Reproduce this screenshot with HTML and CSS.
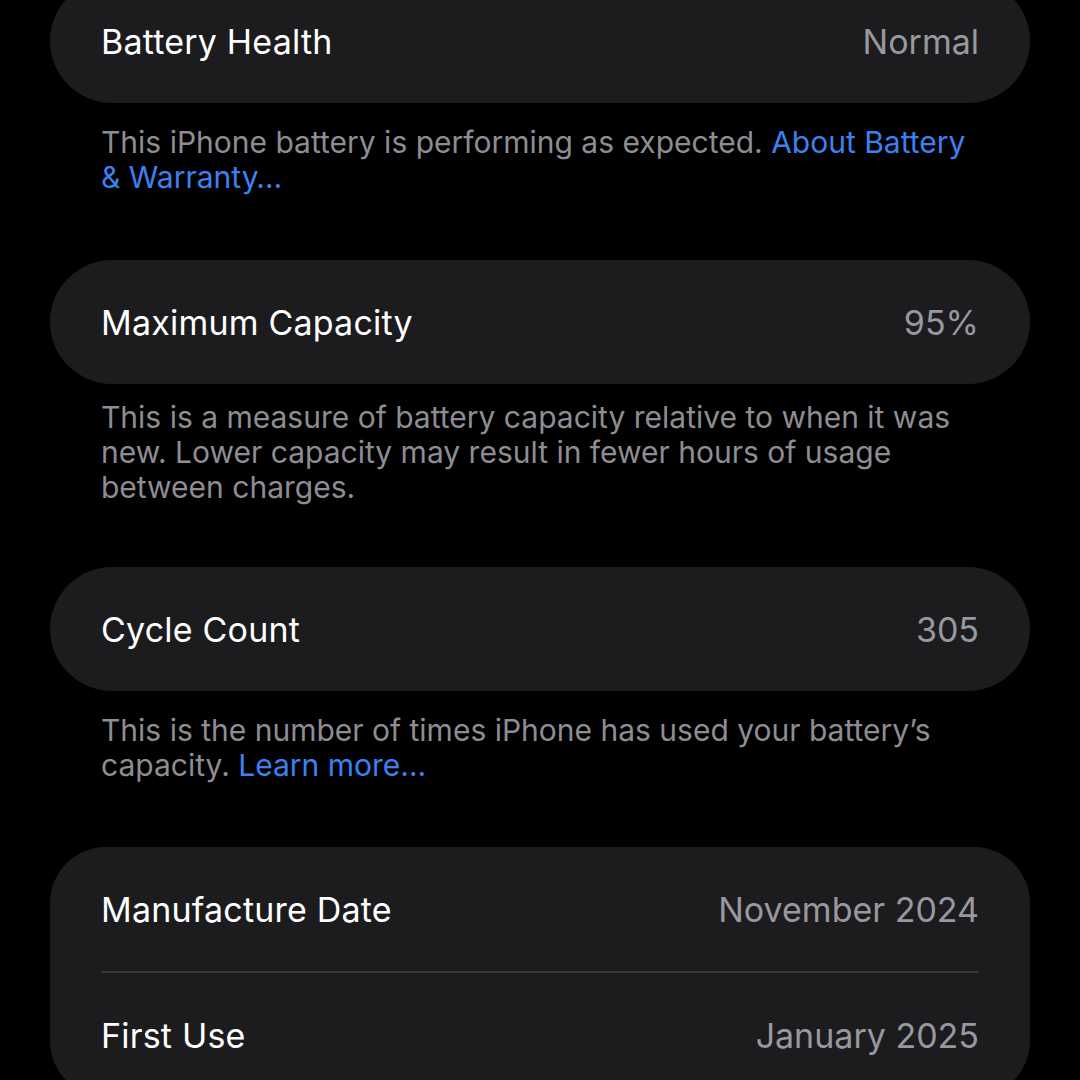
FILE: index.html
```html
<!DOCTYPE html>
<html lang="en">
<head>
<meta charset="utf-8">
<title>Battery Health</title>
<link rel="stylesheet" href="styles.css">
</head>
<body>
<main class="page">
  <section class="group group-first">
    <div class="card">
      <div class="row"><span class="label">Battery Health</span><span class="value">Normal</span></div>
    </div>
    <p class="note">This iPhone battery is performing as expected. <a class="link">About Battery &amp; Warranty…</a></p>
  </section>

  <section class="group">
    <div class="card">
      <div class="row"><span class="label">Maximum Capacity</span><span class="value">95%</span></div>
    </div>
    <p class="note note-tight">This is a measure of battery capacity relative to when it was new. Lower capacity may result in fewer hours of usage between charges.</p>
  </section>

  <section class="group group-third">
    <div class="card">
      <div class="row"><span class="label">Cycle Count</span><span class="value">305</span></div>
    </div>
    <p class="note">This is the number of times iPhone has used your battery’s capacity. <a class="link">Learn more…</a></p>
  </section>

  <section class="group group-last">
    <div class="card card-list">
      <div class="row"><span class="label">Manufacture Date</span><span class="value">November 2024</span></div>
      <div class="divider"></div>
      <div class="row"><span class="label">First Use</span><span class="value">January 2025</span></div>
    </div>
  </section>
</main>
</body>
</html>
```

FILE: styles.css
```css
html, body {
  margin: 0;
  padding: 0;
  background: #000;
  height: 1080px;
  overflow: hidden;
}

.page {
  padding: 0 50px;
  font-family: Inter, "Noto Sans", "Liberation Sans", sans-serif;
  -webkit-font-smoothing: antialiased;
}

.group {
  display: flex;
  flex-direction: column;
  margin-top: 65px;
}

.group-first {
  margin-top: -21px;
}

.group-third {
  margin-top: 62px;
}

.group-last {
  margin-top: 64px;
}

.card {
  background: #1c1c1e;
  border-radius: 62px;
  padding: 0 51px;
}

.card-list {
  border-radius: 56px;
}

.row {
  height: 124px;
  display: flex;
  align-items: center;
  justify-content: space-between;
}

.label {
  color: #ffffff;
  font-size: 34px;
  letter-spacing: 0.2px;
}

.value {
  color: #98989f;
  font-size: 34px;
  letter-spacing: 0;
}

.divider {
  height: 2px;
  background: #38383a;
}

.note {
  margin: 22px 0 0;
  padding: 0 51px;
  color: #8d8d93;
  font-size: 30px;
  line-height: 35px;
  letter-spacing: 0;
}

.note-tight {
  margin-top: 16px;
}

.link {
  color: #3b82f0;
}
```
